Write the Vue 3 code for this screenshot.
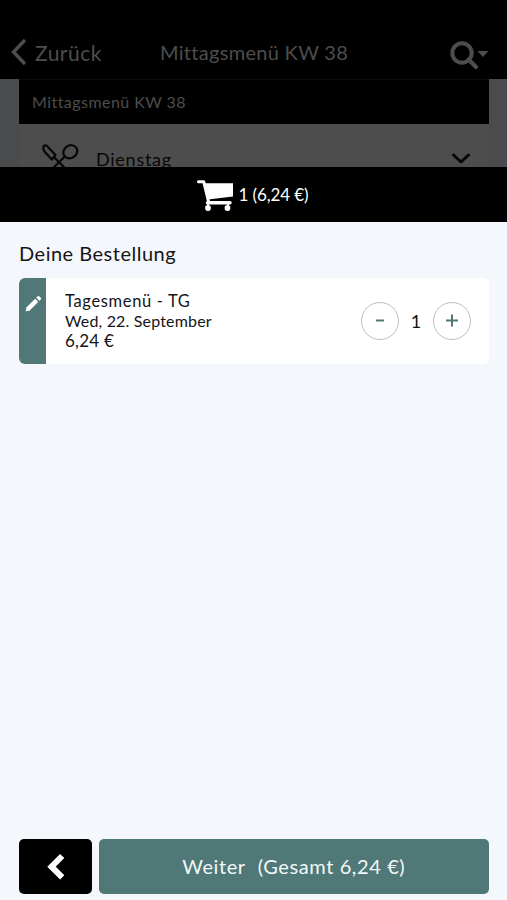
<script setup>
import { ref } from 'vue'

const quantity = ref(1)
</script>

<template>
  <div class="screen">
    <section class="menu-page">
      <header class="nav">
        <div class="back">
          <svg width="16" height="28" viewBox="0 0 16 28" fill="none" stroke="#4d4d4d" stroke-width="3.4">
            <path d="M14 2 L2.5 14 L14 26" />
          </svg>
          <span class="t-back">Zurück</span>
        </div>
        <span class="t-title">Mittagsmenü KW 38</span>
        <svg class="search" width="39" height="30" viewBox="0 0 39 30">
          <circle cx="12" cy="13" r="9.7" fill="none" stroke="#4d4d4d" stroke-width="4" />
          <path d="M18.5 19.5 L26 27" stroke="#4d4d4d" stroke-width="4.2" stroke-linecap="round" />
          <path d="M27.5 11 H38.5 L33 17 Z" fill="#4d4d4d" />
        </svg>
      </header>
      <div class="sheet">
        <div class="category"><span class="t-category">Mittagsmenü KW 38</span></div>
        <div class="day">
          <svg class="cutlery" width="38" height="36" viewBox="0 0 38 36" fill="none" stroke="#070707" stroke-width="2.2" stroke-linejoin="round" stroke-linecap="round">
            <ellipse cx="28.3" cy="7.8" rx="7.2" ry="6.3" transform="rotate(-35 28.3 7.8)" />
            <path d="M22.8 12.5 L4 31" />
            <path d="M1.5 2.5 Q3 0.7 5 2 L13.5 11 L9.8 15.5 L2.5 7.5 Q0.8 5 1.5 2.5 Z" />
            <path d="M12.5 13.8 L30 31" />
          </svg>
          <span class="t-day">Dienstag</span>
          <svg class="chevron" width="20" height="12" viewBox="0 0 20 12" fill="none" stroke="#070707" stroke-width="3" stroke-linecap="round" stroke-linejoin="round">
            <path d="M2.5 2 L10 9 L17.5 2" />
          </svg>
        </div>
      </div>
    </section>

    <div class="cart-bar">
      <svg width="37" height="32" viewBox="0 0 37 32">
        <path d="M1.5 2.7 H6.7 L11.5 22.5" fill="none" stroke="#fff" stroke-width="3" stroke-linecap="round" stroke-linejoin="round" />
        <path d="M7.5 4.3 H36 V17.5 L11 20.5 Z" fill="#fff" />
        <path d="M10.5 23.8 H33" fill="none" stroke="#fff" stroke-width="3.4" stroke-linecap="round" />
        <path d="M11 24 V28 M31 24 V28" stroke="#fff" stroke-width="2" />
        <circle cx="11" cy="29" r="2.9" fill="#fff" />
        <circle cx="30.5" cy="29" r="2.9" fill="#fff" />
      </svg>
      <span class="t-cart">1 (6,24 €)</span>
    </div>

    <main class="order">
      <h1 class="t-heading">Deine Bestellung</h1>
      <article class="item">
        <div class="edit">
          <svg width="17" height="17" viewBox="0 0 17 17" fill="#fff">
            <path d="M0.8 16.2 L1.3 12.4 L10.2 3.7 L13.3 6.8 L4.5 15.7 Z" />
            <path d="M11.2 2.7 L12.8 1.2 Q13.5 0.6 14.2 1.2 L15.9 2.9 Q16.5 3.6 15.9 4.2 L14.3 5.8 Z" />
          </svg>
        </div>
        <div class="details">
          <span class="t-name">Tagesmenü - TG</span>
          <span class="t-date">Wed, 22. September</span>
          <span class="t-price">6,24 €</span>
        </div>
        <div class="stepper">
          <button class="round" aria-label="Weniger">
            <svg width="14" height="14" viewBox="0 0 14 14"><path d="M3 6.5 H11" stroke="#507876" stroke-width="2" /></svg>
          </button>
          <span class="t-qty">{{ quantity }}</span>
          <button class="round" aria-label="Mehr">
            <svg width="14" height="14" viewBox="0 0 14 14"><path d="M1 6.5 H13 M7 0.5 V12.5" stroke="#507876" stroke-width="2" /></svg>
          </button>
        </div>
      </article>
    </main>

    <footer class="actions">
      <button class="previous" aria-label="Zurück">
        <svg width="18" height="28" viewBox="0 0 18 28" fill="none" stroke="#fff" stroke-width="6">
          <path d="M15.2 3 L4.5 13.7 L15.2 24.4" />
        </svg>
      </button>
      <button class="next"><span class="t-next">Weiter</span><span class="t-total">(Gesamt 6,24 €)</span></button>
    </footer>
  </div>
</template>

<style>
body {
  background: #f4f7fb;
}
</style>

<style scoped>
.screen {
  height: 900px;
  display: flex;
  flex-direction: column;
  background: #f4f7fb;
  font-family: Lato, "Liberation Sans", sans-serif;
  color: #151515;
  overflow: hidden;
}
.screen span,
h1 {
  white-space: nowrap;
}
button {
  padding: 0;
  border: 0;
  font: inherit;
}
svg {
  display: block;
  flex: none;
}
.menu-page {
  flex: none;
  height: 167px;
  overflow: hidden;
  background: #494b4d;
}
.nav {
  box-sizing: border-box;
  height: 79px;
  padding: 25px 18px 0 11px;
  display: grid;
  grid-template-columns: 149px 1fr 39px;
  align-items: center;
  background: #000;
  color: #4d4d4d;
}
.back {
  display: flex;
  align-items: center;
  gap: 8px;
}
.t-back {
  font-size: 21px;
  letter-spacing: 0.5px;
}
.t-title {
  font-size: 20px;
  letter-spacing: 0.3px;
}
.search {
  margin-top: 5px;
}
.sheet {
  margin: 0 18px 0 19px;
  background: #4d4d4d;
}
.category {
  box-sizing: border-box;
  height: 45px;
  padding: 0 0 2px 13px;
  border-top: 1px solid #0d0d0d;
  display: flex;
  align-items: center;
  background: #000;
  color: #4d4d4d;
}
.t-category {
  font-size: 16px;
  letter-spacing: 0.45px;
}
.day {
  height: 70px;
  padding: 0 18px 0 23px;
  display: flex;
  align-items: center;
  color: #070707;
}
.cutlery {
  margin-top: 6px;
}
.t-day {
  margin-left: 16px;
  font-size: 18px;
  letter-spacing: 0.75px;
}
.chevron {
  margin-left: auto;
}
.cart-bar {
  flex: none;
  height: 55px;
  padding-right: 2px;
  display: flex;
  align-items: center;
  justify-content: center;
  gap: 5px;
  background: #000;
  color: #fff;
}
.t-cart {
  font-size: 17px;
  letter-spacing: -0.1px;
}
.order {
  flex: 1;
  padding: 18px 18px 0 19px;
}
.t-heading {
  margin: 0 0 12px;
  font-size: 20px;
  line-height: 26px;
  font-weight: 400;
  letter-spacing: 0.5px;
}
.item {
  height: 86px;
  display: flex;
  border-radius: 6px;
  overflow: hidden;
  background: #fff;
}
.edit {
  width: 27px;
  padding: 17px 0 0 2px;
  display: flex;
  justify-content: center;
  box-sizing: border-box;
  background: #507876;
}
.details {
  padding: 13px 0 0 19px;
  display: flex;
  flex-direction: column;
  align-items: flex-start;
  font-size: 16px;
  line-height: 20px;
}
.t-name {
  font-size: 16.5px;
  letter-spacing: 0.65px;
}
.t-date {
  letter-spacing: 0.17px;
}
.t-price {
  font-size: 17px;
  letter-spacing: 0.25px;
}
.stepper {
  margin-left: auto;
  padding-right: 18px;
  display: flex;
  align-items: center;
}
.round {
  box-sizing: border-box;
  width: 38px;
  height: 38px;
  border: 1px solid #b5c5c3;
  border-radius: 50%;
  display: flex;
  align-items: center;
  justify-content: center;
  background: #fff;
}
.t-qty {
  width: 34px;
  text-align: center;
  font-size: 18px;
}
.actions {
  flex: none;
  height: 55px;
  padding: 0 18px 6px 19px;
  display: flex;
  gap: 6.5px;
}
.previous {
  width: 73px;
  border-radius: 5px;
  display: flex;
  align-items: center;
  justify-content: center;
  background: #000;
}
.next {
  flex: 1;
  padding-bottom: 2px;
  border-radius: 5px;
  display: flex;
  align-items: center;
  justify-content: center;
  gap: 12px;
  background: #507876;
  color: #f1f8fa;
  font-size: 20px;
  letter-spacing: 0.6px;
}
</style>
